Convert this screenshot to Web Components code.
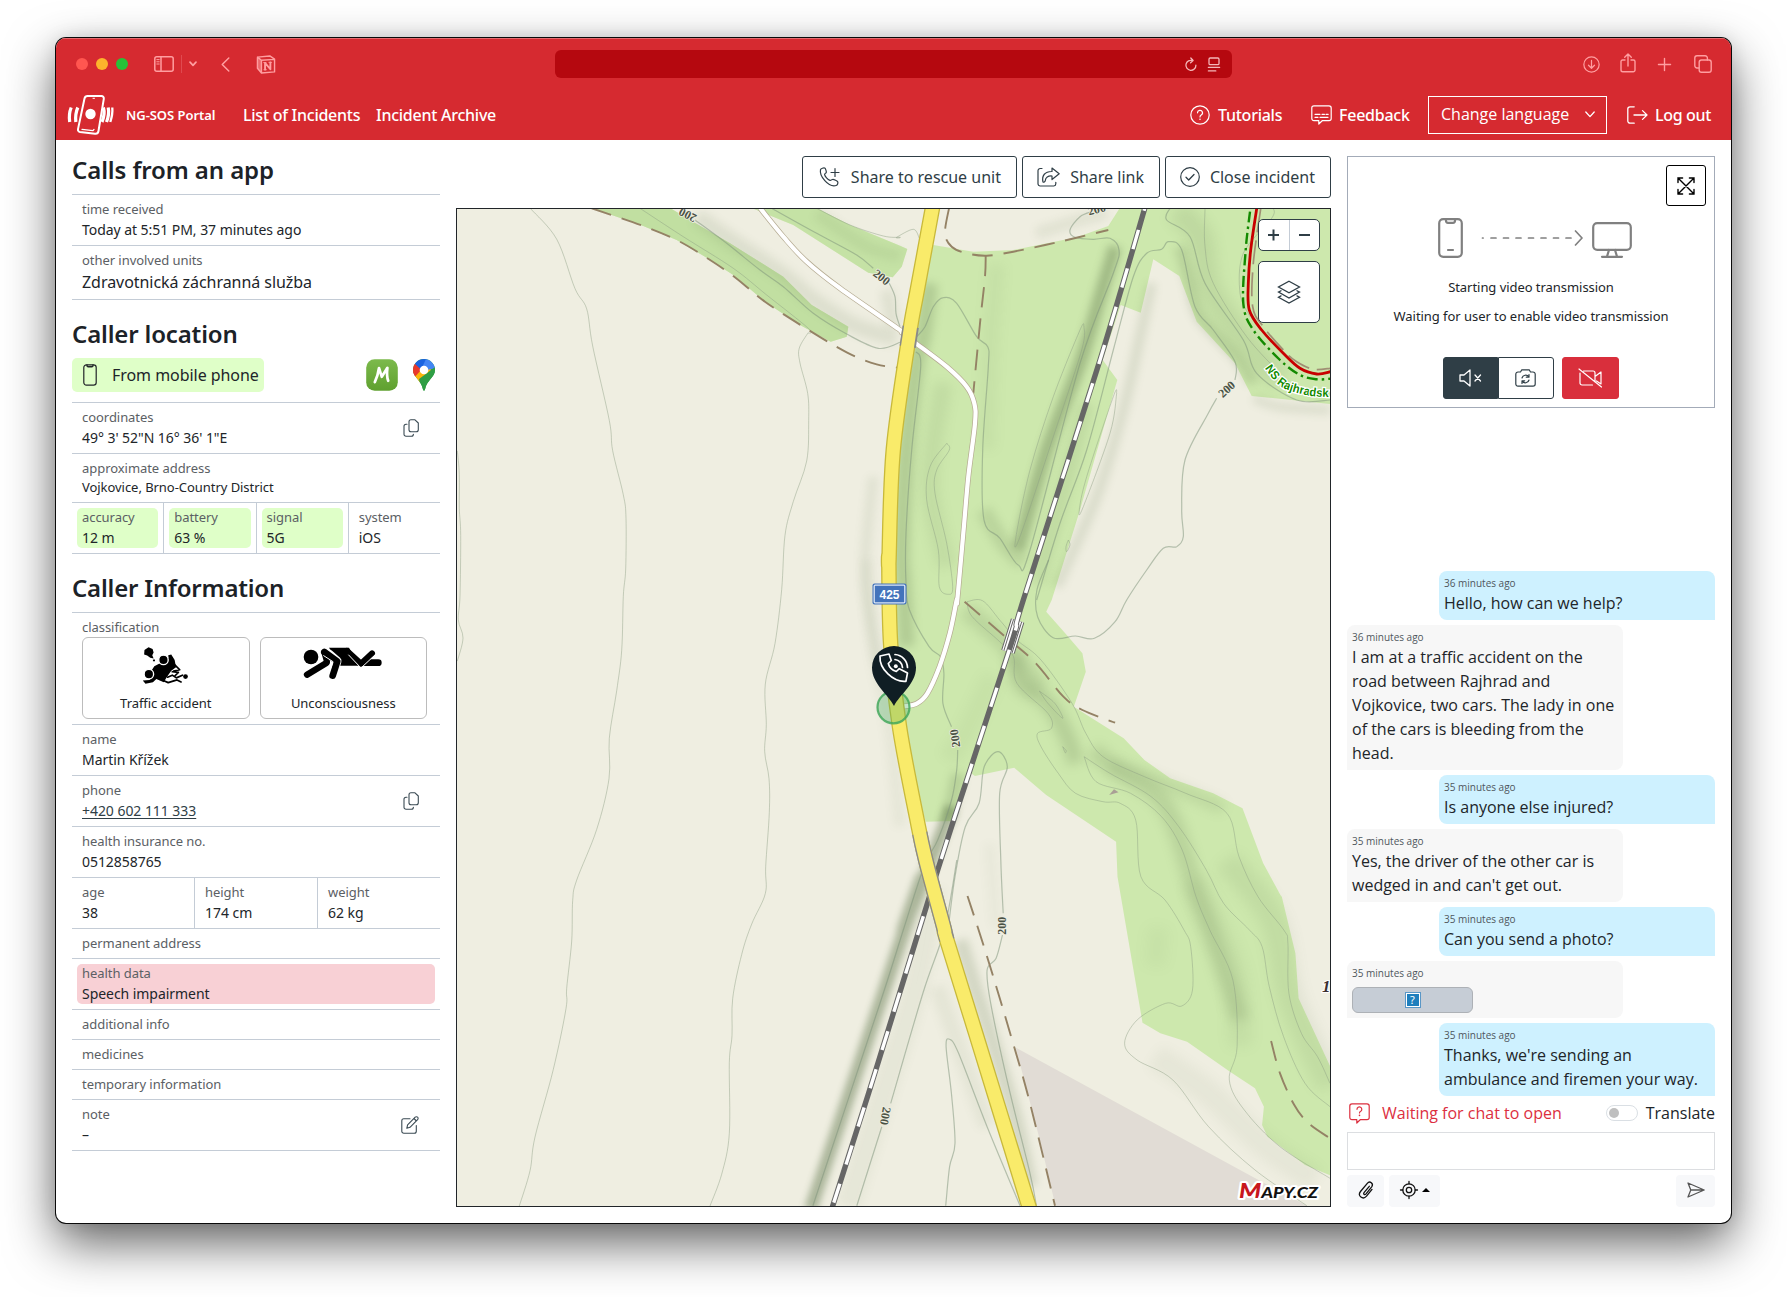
<!DOCTYPE html>
<html lang="en">
<head>
<meta charset="utf-8">
<title>NG-SOS Portal</title>
<style>
  html, body { margin: 0; height: 100%; }
  body { background: #fff; overflow: hidden; font-family: "Noto Sans", "Open Sans", sans-serif; color: #212529; letter-spacing: -.05px; }
</style>
</head>
<body>
<portal-app></portal-app>
<script>
const el = (name, css, html) => customElements.define(name, class extends HTMLElement {
  constructor() { super(); this.attachShadow({ mode: 'open' }); }
  connectedCallback() {
    this.shadowRoot.innerHTML = `<style>*{box-sizing:border-box}${css}</style>` + (typeof html === 'function' ? html(this) : html);
  }
});

/* ---------- icons ---------- */
const ICONS = {
  sidebar: ['0 0 20 16', '<g stroke-width="1.5"><rect x=".8" y=".8" width="18.4" height="14.4" rx="2"/><path d="M7 1v14"/></g><path stroke-width="1" d="M2.8 3.6h2.4M2.8 5.8h2.4M2.8 8h2.4"/>'],
  caret: ['0 0 8 6', '<path stroke-width="1.7" d="M1 1.2 4 4.4 7 1.2"/>'],
  back: ['0 0 9 16', '<path stroke-width="1.6" d="M8 1 1 8l7 7"/>'],
  notion: ['0 0 20 20', '<path stroke-width="1.5" d="M1 2.2 14 1l5 3.4v13.4L5.2 19 1 14zM5.2 5.6 19 4.6M1 2.2l4.2 3.4V19"/><path fill="currentColor" stroke="none" opacity=".55" d="M1 2.2l4.2 3.4V19L1 14z"/><path stroke-width="2" d="M9 15.4V8.4l5.6 6.6V7.8"/><path stroke-width="1" d="M7.6 8h2.4M7.8 15.5h2.6M13 7.7h3"/>'],
  reload: ['0 0 12 15', '<path stroke-width="1.3" d="M10.9 8.2a5 5 0 1 1-3.3-4.6M5.8 1l2.3 2.5-2.5 2.2"/>'],
  reader: ['0 0 12 15', '<rect x="1" y="1" width="10" height="6.6" rx="1.2" stroke-width="1.3"/><path stroke-width="1.3" d="M.4 10.4h11.2M.4 13.9h7.4"/>'],
  download: ['0 0 18 18', '<circle cx="9" cy="9" r="8.1" stroke-width="1.3"/><path stroke-width="1.3" d="M9 4.7v8M5.8 9.8 9 13l3.2-3.2"/>'],
  upload: ['0 0 16 20', '<path stroke-width="1.4" d="M5 7H2.6A1.6 1.6 0 0 0 1 8.600V17a1.800 1.800 0 0 0 1.800 1.800h10.400A1.800 1.800 0 0 0 15 17V8.600A1.600 1.600 0 0 0 13.400 7H11M8 13V1.200M4.700 4.300 8 1.100l3.300 3.200"/>'],
  plus: ['0 0 14 14', '<path stroke-width="1.5" d="M7 .5v13M.5 7h13"/>'],
  tabs: ['0 0 18 18', '<rect x="5.200" y="5" width="12" height="12.200" rx="2.200" stroke-width="1.400"/><path stroke-width="1.400" d="M5 13H3a2.200 2.200 0 0 1-2.200-2.200V3A2.200 2.200 0 0 1 3 .8h8.200A2.200 2.200 0 0 1 13.400 3v2"/>'],
  logo: ['0 0 46 40', '<path stroke-width="2" d="M20 1h13.500a2.400 2.400 0 0 1 2.300 2.800L30.500 36a3.200 3.200 0 0 1-3.500 2.700L12 37a2.400 2.400 0 0 1-2-2.900L16.500 3.500A3.300 3.300 0 0 1 20 1z"/><path stroke-width="1.300" d="m14 34.400 11 1.200 1-1.200"/><circle cx="22.500" cy="19" r="5.200" fill="currentColor" stroke="none"/><path stroke-width="1" d="M25 3.300h1.500"/><path stroke-width="3.200" stroke-linecap="butt" d="M3.200 12.500Q.5 19 1.700 27M9.800 12.500Q7 19 7.800 27M35.400 12.500Q37.400 19 34 27M40.200 12.500Q41.600 19 38.500 27"/><path stroke-width="2.300" stroke-linecap="butt" d="M44.300 12.500Q44.900 19 42.300 27"/>'],
  help: ['0 0 20 20', '<circle cx="10" cy="10" r="9.200" stroke-width="1.200"/><path stroke-width="1.200" d="M7.500 7.800a2.500 2.500 0 1 1 3.700 2.200c-.8.500-1.200.9-1.200 1.900"/><circle cx="10" cy="14.200" r=".8" fill="currentColor" stroke="none"/>'],
  feedback: ['0 0 21 20', '<path stroke-width="1.200" d="M3 .8h15A2.200 2.200 0 0 1 20.200 3v10.500a2.200 2.200 0 0 1-2.200 2.200h-6.800L7.800 19v-3.300H3a2.200 2.200 0 0 1-2.200-2.200V3A2.200 2.200 0 0 1 3 .8zM4 9.300h5M11 9.300h2.500M15 9.300h2.200M4 12.300h3M9 12.300h8"/>'],
  chevron: ['0 0 10 7', '<path stroke-width="1.300" d="M.8 1 5 5.600 9.200 1"/>'],
  logout: ['0 0 21 18', '<path stroke-width="1.300" d="M7.200.8H3A2.200 2.200 0 0 0 .8 3v12A2.200 2.200 0 0 0 3 17.200h4.200M7 9h13M15.500 4.600 20 9l-4.500 4.400"/>'],
  phone: ['0 0 14 22', '<rect x=".8" y=".8" width="12.400" height="20.400" rx="2.600" stroke-width="1.200"/><path stroke-width="1.400" d="M4 1v.6c0 .8.4 1.200 1.200 1.200h3.600c.8 0 1.200-.4 1.200-1.200V1"/>'],
  copy: ['0 0 16 18', '<path stroke-width="1.100" d="M8 .7h3.700L15.300 4v6.800a2 2 0 0 1-2 2H8a2 2 0 0 1-2-2V2.700a2 2 0 0 1 2-2zM4 5.200h-1a2 2 0 0 0-2 2v8a2 2 0 0 0 2 2h5.400a2 2 0 0 0 2-2"/>'],
  edit: ['0 0 18 18', '<path stroke-width="1.100" d="M9 2.800H2.800a2 2 0 0 0-2 2v10.400a2 2 0 0 0 2 2h10.500a2 2 0 0 0 2-2V9.500M5.800 12.300l.8-3.500 7.600-7.600a1.600 1.600 0 0 1 2.400 2.400L9 11.300zM13 2.500 15.400 5"/>'],
  callplus: ['0 0 21 20', '<path stroke-width="1.200" d="M1 2.600c.3-1.100 3.300-2 4.200-1.500.9.600 1.800 3.400 1.600 4.300-.2.900-1.900 1.200-1.700 2.100.4 1.900 3 5 5.400 5.900 1 .4 1.800-1.100 2.700-1.100 1.100-.1 4.800 1.600 5.100 2.700.3 1.200-.3 3.200-1.600 3.500C8.600 20.700-.3 8.700 1 2.600zM15.500 1.500v8M11.500 5.500h8"/>'],
  sharelink: ['0 0 23 20', '<path stroke-width="1.200" d="M5 1.500H3.200A2.200 2.200 0 0 0 1 3.700v13.100A2.200 2.200 0 0 0 3.200 19h13.600a2.200 2.200 0 0 0 2-2.200v-1.500M6 15C4.500 8.500 8 4.300 15 4.500V1l7.200 5.700L15 12.500V9C11 8.700 8.500 10.300 8.300 13.500c0 1-1.800 2.200-2.300 1.500z"/>'],
  check: ['0 0 20 20', '<circle cx="10" cy="10" r="9.300" stroke-width="1.200"/><path stroke-width="1.300" d="M6 10.300 8.700 13 14 7.500"/>'],
  expand: ['0 0 18 18', '<path stroke-width="1.400" stroke-linejoin="miter" d="M1 5.600V1h4.600M12.400 1H17v4.600M17 12.400V17h-4.600M5.600 17H1v-4.600M1 1l16 16M17 1 1 17"/>'],
  bigphone: ['0 0 25 40', '<rect x="1.200" y="1.200" width="22.600" height="37.600" rx="4" stroke-width="2.200"/><path stroke-width="2.200" d="M8 1.500v1.300c0 1.200.8 2 2 2h5c1.200 0 2-.8 2-2V1.500M10 32h5"/>'],
  arrow: ['0 0 102 16', '<path stroke-width="1.700" stroke-dasharray="5 7.500" d="M10 8h86"/><path stroke-width="1.700" d="M1.500 8h.6m92.400-7 6.500 7-6.500 7"/>'],
  monitor: ['0 0 40 36', '<rect x="1.200" y="1.200" width="37.600" height="26.600" rx="4" stroke-width="2.200"/><path stroke-width="2.200" d="M17 28l-2 6.500M23 28l2 6.500M10 34.800h20"/>'],
  mute: ['0 0 23 18', '<path stroke-width="1.300" d="M1 6h4l6-5v16l-6-5H1zM16 6l5.500 6M21.500 6 16 12"/>'],
  flip: ['0 0 21 18', '<path stroke-width="1.200" d="M3 3h2.500l1.300-2.200h7.400L15.500 3H18a2.200 2.200 0 0 1 2.200 2.200V15a2.200 2.200 0 0 1-2.200 2.200H3A2.200 2.200 0 0 1 .8 15V5.200A2.200 2.200 0 0 1 3 3zM7 9a3.800 3.800 0 0 1 6.800-1.200M14 5.500v2.700h-2.700M14 11a3.800 3.800 0 0 1-6.800 1.200M7 14.500v-2.700h2.700"/>'],
  novideo: ['0 0 25 20', '<path stroke-width="1.200" d="M5.500 3H15a2 2 0 0 1 2 2v9M14.500 17H4a2 2 0 0 1-2-2V5M17 8.500l6-4.500v12l-4.500-3M1 1l22.500 18"/>'],
  layers: ['0 0 24 24', '<path stroke-width="1.300" stroke-linejoin="miter" d="M12 1.200 22.500 7 12 12.700 1.500 7zM4 10.700l-2.500 1.400L12 18l10.500-5.900L20 10.700M4 15.900l-2.500 1.400L12 23l10.500-5.700L20 15.900"/>'],
  question: ['0 0 21 21', '<path stroke-width="1.200" d="M3 .8h15A2.200 2.200 0 0 1 20.200 3v11.500a2.200 2.200 0 0 1-2.200 2.200h-6.800L7.800 20v-3.300H3A2.200 2.200 0 0 1 .8 14.500V3A2.200 2.200 0 0 1 3 .8zM8 6.300a2.400 2.400 0 1 1 3.700 2c-.9.500-1.200.9-1.200 1.700"/><circle cx="10.500" cy="12.400" r=".8" fill="currentColor" stroke="none"/>'],
  clip: ['0 0 16 18', '<path stroke-width="1.300" d="M11.300 5.300 6 11.700c-1 1.300.7 2.700 1.800 1.400l5.900-7.300c2.300-3.200-1.900-6.500-4.400-3.500L2.500 10.500c-3.300 4.300 2.400 8.900 6 4.700l5.500-6.800"/>'],
  target: ['0 0 18 18', '<circle cx="9" cy="9" r="6.200" stroke-width="1.300"/><circle cx="9" cy="9" r="2.700" stroke-width="1.300"/><path stroke-width="1.300" d="M9 .5v2.300M9 15.200v2.300M.5 9h2.300M15.200 9h2.300"/>'],
  send: ['0 0 18 16', '<path stroke-width="1.300" d="M1 1l16.200 7L1 15l2.800-7zM3.800 8h13"/>'],
  mapy: ['0 0 32 32', '<defs><linearGradient id="g" x2="0" y2="1"><stop stop-color="#7cba4c"/><stop offset="1" stop-color="#5fa02f"/></linearGradient></defs><rect x=".2" y=".2" width="31.600" height="31.600" rx="8.500" fill="url(#g)" stroke="none"/><path stroke="#fff" stroke-width="2.700" stroke-linejoin="round" d="M8.800 23.200Q11.800 17 13 9L15.800 17.800 21.400 8.800Q20.400 17 22.200 21.800"/>'],
  gmaps: ['0 0 22 32', '<clipPath id="p"><path d="M11 0a11 11 0 0 1 11 11c0 7.500-8 9.500-10 19.500-.3 1.700-1.700 1.700-2 0C8 20.500 0 18.500 0 11A11 11 0 0 1 11 0z"/></clipPath><g clip-path="url(#p)" stroke="none"><path fill="#34a047" d="M0 0h22v32H0z"/><path fill="#fbb60b" d="M-2 21 14 2l4 9L3 28z"/><path fill="#e8382c" d="M-4 18 8 3v5L0 19z"/><path fill="#e8382c" d="M0 3 9 10 0 20z"/><path fill="#1a63e0" d="M2 0h12L8.500 11 1.500 4.500z"/><path fill="#4285f4" d="M13 0h10v9l-9 2-5.500-1.500z"/><path fill="#2f9e44" d="M23 7.500v24H8L6 20z"/></g><circle cx="11" cy="11" r="4.300" fill="#fff" stroke="none"/>'],
  crash: ['280 260 135 115', '<g stroke="#000"><g fill="#000" stroke="none"><path d="M284 272 296 264l12 5 3 10-4 8 4 10-10-2-9-7-9-3z"/><rect x="309" y="300" width="6" height="5"/><path d="M354 287l9-2 10 16 4 22-14 10-14 20-8 14-22-10-10 10-22 4-8-9 20-2 8-14-2-14 8-12 14-8 16-6 12-12z"/></g><circle cx="340" cy="301" r="14" fill="#000" stroke="#fff" stroke-width="4"/><circle cx="297" cy="343" r="14" fill="#000" stroke="#fff" stroke-width="4"/><circle cx="405" cy="350" r="7" fill="#000" stroke="none"/><g stroke-width="5"><path d="M372 314l16 16-18 4M366 336l18 2-12 12M352 352l14-6 12 8 18-8M336 360l18 8 26-8 12 6"/></g></g>'],
  faint: ['760 265 240 105', '<g stroke="#000"><path fill="#000" stroke="none" d="M838 270h60l30 54h-56z"/><path stroke-width="19" d="M830 316 772 351"/><path stroke-width="18" d="M892 280 934 318 967 287"/><path stroke-width="20" d="M944 315h42"/><path stroke="#fff" stroke-width="3" d="M897 292 934 331 976 292"/><path stroke="#fff" stroke-width="25" d="M838 288 863 310 850 352"/><path stroke-width="20" d="M824 283 863 311 849 354"/><path stroke-width="18" d="M824 284 832 312"/><path stroke="#fff" stroke-width="3" d="M822 294 850 312 843 332"/><circle cx="784" cy="298" r="22" fill="#000" stroke="none"/></g>'],
};
el('ng-icon', ':host{display:block;flex:none;line-height:0}svg{display:block;width:100%;height:100%;overflow:visible}',
  h => { const [vb, body] = ICONS[h.getAttribute('name')];
    h.style.width = h.getAttribute('w') + 'px'; h.style.height = h.getAttribute('h') + 'px';
    return `<svg viewBox="${vb}" preserveAspectRatio="xMidYMid meet" fill="none" stroke="currentColor" stroke-linecap="round" stroke-linejoin="round">${body}</svg>`; });

/* ---------- window chrome ---------- */
el('mac-window', `:host{display:block;width:1675px;height:1185px;margin:38px 0 0 56px;border-radius:10px;background:#fff;
  box-shadow:0 0 0 1px #0a0a0a,0 20px 50px rgba(0,0,0,.62),0 0 18px rgba(0,0,0,.1)}
  .in{display:flex;flex-direction:column;height:100%;overflow:hidden;border-radius:10px}`, '<div class="in"><slot></slot></div>');

el('browser-bar', `:host{display:grid;grid-template-columns:499px 677px 1fr;align-items:center;height:52px;background:#d62a30;color:#ff9ea0;box-shadow:inset 0 1px #e6696d}
  .l{display:flex;align-items:center;padding-left:20px}
  i{width:12px;height:12px;border-radius:50%;margin-right:8px}
  .sep{width:1px;height:18px;background:#e04a50;margin:0 7px 0 7px}
  .addr{height:28px;border-radius:6px;background:#b5080f;display:flex;align-items:center;justify-content:flex-end;gap:11px;padding-right:12px;color:#f3b6b8}
  .r{display:flex;align-items:center;justify-content:flex-end;padding-right:19px}`,
  `<div class="l"><i style="background:#ff5650"></i><i style="background:#fdb42c"></i><i style="background:#27c138;margin-right:26px"></i>
   <ng-icon name="sidebar" w="20" h="16"></ng-icon><span class="sep"></span><ng-icon name="caret" w="8" h="6"></ng-icon>
   <ng-icon name="back" w="9" h="15" style="margin-left:24px"></ng-icon><ng-icon name="notion" w="20" h="19" style="margin-left:26px"></ng-icon></div>
   <div class="addr"><ng-icon name="reload" w="12" h="15"></ng-icon><ng-icon name="reader" w="12" h="15"></ng-icon></div>
   <div class="r"><ng-icon name="download" w="17" h="17"></ng-icon><ng-icon name="upload" w="16" h="20" style="margin:0 22px 2px 20px"></ng-icon><ng-icon name="plus" w="13" h="13"></ng-icon><ng-icon name="tabs" w="18" h="18" style="margin-left:23px"></ng-icon></div>`);

el('nav-item', ':host{display:flex;align-items:center;gap:8px;flex:none;white-space:nowrap;font-size:16px;font-weight:500;letter-spacing:var(--ls,-.25px)}', '<slot></slot>');
el('portal-nav', `:host{display:flex;align-items:center;height:50px;background:#d62a30;color:#fff;padding:0 20px 0 12px}
  .name{font-size:13px;font-weight:600;width:89px;margin:0 28px 0 12px;white-space:nowrap}
  .sp{flex:1}
  .sel{display:flex;align-items:center;justify-content:space-between;width:179px;height:38px;border:1px solid #fff;padding:0 11px 2px 12px;margin:0 20px 0 17px;font:500 16px "Open Sans","Noto Sans",sans-serif;letter-spacing:0;white-space:nowrap}`,
  `<ng-icon name="logo" w="46" h="40"></ng-icon><span class="name">NG-SOS Portal</span>
   <nav-item style="width:118px;margin-right:15px">List of Incidents</nav-item><nav-item>Incident Archive</nav-item><span class="sp"></span>
   <nav-item style="width:93px;margin-right:28px"><ng-icon name="help" w="20" h="20"></ng-icon>Tutorials</nav-item>
   <nav-item style="width:100px;gap:7px"><ng-icon name="feedback" w="21" h="20"></ng-icon>Feedback</nav-item>
   <div class="sel">Change language<ng-icon name="chevron" w="10" h="7"></ng-icon></div>
   <nav-item style="width:84px;gap:7px;--ls:-.33px"><ng-icon name="logout" w="21" h="18"></ng-icon>Log out</nav-item>`);

/* ---------- left column ---------- */
el('info-section', `:host{display:block}h2{margin:0;padding-bottom:var(--hb,10px);font:600 24px/29px "Noto Sans",sans-serif;letter-spacing:var(--hs,-.16px);white-space:nowrap;color:#1c2227}
  .rows{border-bottom:1px solid #c4ccd6}:host(:not(:last-of-type)){margin-bottom:19px}`,
  h => `<h2>${h.getAttribute('title-text')}</h2><slot name="lead"></slot><div class="rows"><slot></slot></div>`);
el('info-cell', `:host{display:block;flex:1 1 0;min-width:0;padding:5px}
  :host([divided]){border-right:1px solid #c4ccd6}
  .b{border-radius:5px;padding:0 5px;height:100%}
  :host([tone=good]) .b{background:#dfffc8}:host([tone=bad]) .b{background:#f8d0d5}
  .k{font-size:13px;line-height:19px;height:19px;color:#5b6064;white-space:nowrap}
  .v{display:block;font-size:var(--vs,14px);line-height:var(--vl,21px);white-space:nowrap}
  .row{display:flex;align-items:center;justify-content:space-between;height:100%}`,
  h => `<div class="b row"><div><div class="k">${h.getAttribute('k')}</div><span class="v"><slot></slot></span></div><slot name="act"></slot></div>`);
el('info-row', ':host{display:flex;border-top:1px solid #c4ccd6;height:51px}', '<slot></slot>');
el('kind-card', `:host{display:flex;flex-direction:column;align-items:center;justify-content:space-between;height:82px;border:1px solid #bcbcbc;border-radius:6px;font-size:13px;padding:8px 0 5px;line-height:20px}`, '<slot></slot>');
el('incident-details', `:host{display:block;width:368px;flex:none}
  .lead{display:flex;align-items:center;height:34px;margin-bottom:10px}
  .src{display:flex;align-items:center;width:192px;height:34px;border-radius:5px;background:#dfffc8;font-size:16px;padding-left:11px;gap:15px;margin-right:auto;white-space:nowrap}
  .kinds{display:flex;gap:10px;padding:0 13px 0 10px}
  .cls{border-top:1px solid #c4ccd6;height:112px;font-size:13px}
  .cls>p{margin:0;padding:5px 10px 0;line-height:19px;color:#5b6064;height:24px}
  a{color:#2f3e46;text-decoration:underline;text-underline-offset:2px}`,
  `<info-section title-text="Calls from an app" style="--hs:-.1px;margin-top:-1px"><info-row><info-cell k="time received">Today at 5:51 PM, 37 minutes ago</info-cell></info-row>
   <info-row style="height:54px"><info-cell k="other involved units" style="--vs:16px;--vl:24px">Zdravotnická záchranná služba</info-cell></info-row></info-section>
   <info-section title-text="Caller location"><div slot="lead" class="lead"><div class="src"><ng-icon name="phone" w="14" h="22"></ng-icon>From mobile phone</div>
     <ng-icon name="mapy" w="32" h="32"></ng-icon><ng-icon name="gmaps" w="22" h="32" style="margin:0 5px 0 15px"></ng-icon></div>
   <info-row><info-cell k="coordinates">49° 3' 52"N 16° 36' 1"E<ng-icon slot="act" name="copy" w="16" h="18" style="margin:0 11px 0 0;color:#3a4a53"></ng-icon></info-cell></info-row>
   <info-row style="height:49px"><info-cell k="approximate address" style="--vs:13px;--vl:19px">Vojkovice, Brno-Country District</info-cell></info-row>
   <info-row><info-cell divided tone="good" k="accuracy">12 m</info-cell><info-cell divided tone="good" k="battery">63 %</info-cell><info-cell divided tone="good" k="signal">5G</info-cell><info-cell k="system">iOS</info-cell></info-row></info-section>
   <info-section title-text="Caller Information" style="--hs:-.2px">
   <div class="cls"><p>classification</p><div class="kinds"><kind-card style="flex:1"><ng-icon name="crash" w="46" h="39"></ng-icon>Traffic accident</kind-card><kind-card style="flex:1"><ng-icon name="faint" w="80" h="35"></ng-icon>Unconsciousness</kind-card></div></div>
   <info-row><info-cell k="name">Martin Křížek</info-cell></info-row>
   <info-row><info-cell k="phone"><a>+420 602 111 333</a><ng-icon slot="act" name="copy" w="16" h="18" style="margin:0 11px 0 0;color:#3a4a53"></ng-icon></info-cell></info-row>
   <info-row><info-cell k="health insurance no.">0512858765</info-cell></info-row>
   <info-row><info-cell divided k="age">38</info-cell><info-cell divided k="height">174 cm</info-cell><info-cell k="weight">62 kg</info-cell></info-row>
   <info-row style="height:30px"><info-cell k="permanent address"></info-cell></info-row>
   <info-row><info-cell tone="bad" k="health data">Speech impairment</info-cell></info-row>
   <info-row style="height:30px"><info-cell k="additional info"></info-cell></info-row>
   <info-row style="height:30px"><info-cell k="medicines"></info-cell></info-row>
   <info-row style="height:30px"><info-cell k="temporary information"></info-cell></info-row>
   <info-row><info-cell k="note">–<ng-icon slot="act" name="edit" w="18" h="18" style="margin:0 11px 0 0;color:#3a4a53"></ng-icon></info-cell></info-row></info-section>`);

/* ---------- map ---------- */
const FRAMES = { n: [450, 200, 3, 3], e: [880, 150, 3, 3], m: [800, 560, 2.904, 3], s: [780, 860, 2.8, 3], w: [440, 150, 3, 1.4792] };
const pts = src => { let f, out = []; src.trim().split(/\s+/).forEach(t => { if (FRAMES[t]) { f = FRAMES[t]; return; } const [x, y] = t.split(',').map(Number); out.push([f[0] + x / f[2], f[1] + y / f[3]]); }); return out; };
const n1 = v => v.toFixed(1);
const poly = src => 'M' + pts(src).map(p => p.map(n1).join(' ')).join('L') + 'Z';
const curve = src => { const p = pts(src); let d = `M${n1(p[0][0])} ${n1(p[0][1])}`;
  for (let i = 0; i < p.length - 1; i++) { const a = p[i - 1] || p[i], b = p[i], c = p[i + 1], e = p[i + 2] || c;
    d += `C${n1(b[0] + (c[0] - a[0]) / 6)} ${n1(b[1] + (c[1] - a[1]) / 6)} ${n1(c[0] - (e[0] - b[0]) / 6)} ${n1(c[1] - (e[1] - b[1]) / 6)} ${n1(c[0])} ${n1(c[1])}`; } return d; };
const WOODS = [
  'n 425,24 660,24 720,60 840,130 1000,230 1085,315 1195,380 1190,410 1142,425 1050,375 945,305 850,225 765,170 680,120 580,78',
  'n 905,24 1100,24 1200,75 1350,137 e 82,297 65,350 38,382 n 1255,218 1030,75',
  'e 160,285 280,305 400,300 590,262 685,228 718,176 1351,176 1351,762 1115,738 1065,640 950,515 898,378 820,328 782,488 722,465 668,630 712,690 600,1080 515,1350 m 715,155 770,220 820,280 830,335 795,440 940,535 1000,600 1075,655 1200,700 1285,745 1345,910 1395,1005 s 1405,110 1443,280 1452,415 1545,630 1545,948 1470,915 1440,890 1365,830 1350,795 1355,740 1330,685 1260,635 1140,545 1065,520 1015,488 945,50 m 918,845 715,705 622,623 508,648 497,640 447,783 365,785 340,700 290,500 262,250 e 27,1290 40,900 88,560',
];
const SHADES = [
  ['m 440,740 400,850 300,1110 s 395,60 280,430 85,1050', 13, .46, 3.5], ['m 460,640 430,780', 14, .2, 4],
  ['e 705,290 660,440 600,640 500,900 415,1200', 13, .4, 4], ['e 310,1080 370,1180 430,1240', 16, .16, 5],
  ['e 150,400 130,560 110,640 80,900 65,1200 m 300,60 310,260', 16, .24, 5], ['e 190,700 150,1000 200,1250', 18, .1, 6],
  ['m 480,150 540,200 620,280 700,390', 18, .16, 6], ['m 620,280 640,370 720,430 780,540 800,610', 16, .22, 6],
  ['m 850,570 920,630 1030,700 1090,800 1150,1000 s 1200,200 1290,480', 18, .18, 6],
  ['m 900,610 1080,680 1230,745', 12, .14, 6], ['s 1250,0 1380,180 1430,420 1540,680', 26, .1, 7], ['s 1160,60 1270,330 1290,560', 24, .08, 7],
  ['s 505,240 545,380 600,560 660,780 700,980', 15, .19, 4], ['s 440,380 500,560 580,800', 16, .07, 5], ['s 430,80 380,380 290,700 190,1040', 24, .06, 5],
  ['n 740,50 840,120 1000,225 1090,300 1210,375 1340,415', 16, .12, 5], ['n 1100,40 1250,140 1350,170', 12, .09, 4], ['n 1310,270 1330,380', 14, .1, 4],
  ['e 900,290 930,400 960,500 1070,620 1120,700', 12, .18, 4], ['e 1120,745 1200,770 1351,780', 9, .13, 4], ['e 890,180 960,260 990,420 1100,580 1200,690', 24, .13, 7],
  ['e 815,400 780,560 730,780 650,1040 530,1310', 10, .15, 4], ['e 620,760 540,1060 470,1300', 16, .11, 5], ['e 680,190 600,210 470,250', 10, .11, 5],
  ['n 1270,830 1245,1130 1290,1400', 10, .1, 4], ['m 195,0 210,250 260,500 290,800', 12, .06, 4], ['e 350,340 330,600 320,900', 18, .06, 6],
  ['m 560,350 480,520 430,600', 22, .05, 6], ['s 1050,590 1200,700 1350,850 1500,960', 26, .06, 6], ['m 550,850 570,1100', 12, .04, 4], ['s 1060,200 1050,320', 22, .05, 7],
];
const CONTOURS = [
  'w 272,87 350,132 405,205 440,235 458,290 508,400 518,445 550,510 558,545 557,620 550,660 545,740 530,800 508,870 507,930 470,1005 410,1080 398,1110 395,1170 380,1240 378,1270 340,1360 285,1460 270,1510 238,1562',
  'w 1105,270 1078,293 1080,315 1103,360 1106,400 1100,460 1060,520 1035,570 1025,650 1005,730 976,790 979,850 974,890 987,930 988,980 977,1060 976,1100 935,1145 905,1190 878,1255 876,1310 868,1350 868,1455 845,1515 810,1562',
  'w 52,445 58,480 58,530 62,570 60,660 55,695 69,722 52,756',
  'n 570,25 700,110 850,205 950,285 1075,385 1075,400', 'n 1100,25 1200,75 1300,108 1350,112 e 50,262 100,238 118,265',
  'e 200,880 208,900 170,960 165,1030 200,1180 218,1310 205,1333 178,1310 175,1200 140,1050 150,950 200,880',
  'e 612,528 605,600 520,860 420,1160 408,1160 450,960 520,740 600,540 612,528', 'e 710,730 690,850 610,1070 598,1080 620,980 700,740 710,730',
  'e 975,175 975,290 1000,400 1100,560 1200,670', 'e 1180,175 1175,205 1090,310 1080,430 1110,500',
  'e 565,1170 570,1185 560,1205 558,1190 565,1170', 'm 763,560 773,572 770,578 763,560', 'm 695,393 740,430 763,475 720,430 695,393',
  'm 485,125 530,122 580,180 630,240 700,300 790,430 830,520 880,590 1000,650 1120,700 1240,760 1275,890 1330,1010 1405,1110 s 1422,250 1425,400 1460,520 1505,590 1540,670',
  'm 485,125 500,170 580,245 620,290 630,370 720,460 730,505 690,520 700,560 750,640 800,700 880,725 930,730 975,780 990,950 1060,1020 1115,1110 s 1150,260 1155,390 1125,438 1080,430 1000,480 965,550 1000,600 1100,660 1200,800 1330,930 1475,1037',
  'm 825,590 860,665 960,700 1050,770 1110,870 1150,1010 1190,1110 s 1268,360 1280,560 1258,660 1300,750 1400,860 1540,955',
  'm 825,590 900,640 1020,710 1100,800 1180,930 1230,1030 1305,1110 s 1350,260 1370,380 1410,530 1470,670 1540,740',
];
const BOLD_CONTOURS = [
  'n 735,60 830,130 930,210 1000,260 1090,340 1190,402 1285,445 1350,427 e 62,572', 'n 965,25 1100,100 1220,165 1270,205', 'n 1318,250 1335,290 1338,340 1350,380',
  'e 110,560 135,530 160,470 190,443 230,460 290,560 323,590 325,650 308,900 312,1110 360,1165 415,1245 450,1200 600,640 700,370 717,300 690,265 640,268 585,262 570,240 600,200 635,185',
  'e 108,605 122,650 95,900 78,1150 78,1300 m 318,150 375,260 408,290 418,340 415,430 440,500', 'm 458,570 455,630 440,720 400,840 360,920 300,1110 s 280,430 92,1037',
  'e 470,1350 540,1120 620,900 700,600 760,380 800,310 845,298 865,275 905,300 945,470 1000,540 1065,635 1065,690', 'e 1010,745 985,790 915,930 905,1080 910,1160 890,1190 850,1195 800,1260 740,1350 m 915,185 855,235 800,228 735,233 690,170 688,90 722,0',
  'e 870,175 860,210 930,260 975,400 1090,570 1130,670 1250,750 1351,750',
  'm 430,1110 450,950 480,800 520,730 535,620 575,575 602,620 580,700 583,900 590,1060', 's 495,0 460,210 400,400 310,730', 's 285,800 215,1037',
  's 623,225 605,295 580,330 590,430 640,680 700,940 718,1037', 's 464,1037 475,920 490,850 480,700 465,560 475,538 500,580 580,800 672,1037',
];
const TRACKS = [
  'n 425,25 580,78 680,120 765,170 850,228 945,305 1060,380 1190,457 1280,493 1345,503', 'e 207,175 195,250 215,290 260,310 320,317 400,305 540,275 685,240',
  'e 317,317 315,380 300,520 280,730', 'm 478,125 590,225 680,305 765,410 820,450 915,488', 's 525,108 580,290 650,540 700,730 770,1037', 's 1375,543 1400,640 1440,735 1480,790 1540,835',
];
const LANE = 'n 930,24 1000,110 1070,185 1170,265 1350,390 e 66,548 108,580 200,650 260,710 283,760 285,820 265,980 250,1150 232,1350 m 455,120 435,220 405,320 370,400 340,430 300,440';
const ROAD = 'e 160,160 112,420 87,560 40,900 27,1230 m 258,0 263,250 289,500 340,780 365,900 417,1100 s 467,240 548,520 706,1070';
const RAIL = 'e 797,165 660,630 430,1350 m 620,230 500,610 400,930 s 248,700 144,1050';
const LABELS = [['n 713,45', 207], ['n 1295,232', 38], ['e 1040,718', -42], ['m 450,535', -98], ['s 622,197', -90], ['s 295,768', 100], ['e 650,178', -15]];

el('map-view', `:host{display:block;height:999px;border:1px solid #212529;position:relative;overflow:hidden;background:#efeee1;letter-spacing:0}
  svg.map{display:block;width:873px;height:997px}
  .ctl{position:absolute;right:10px;width:62px;background:#fff;border:1px solid #2f3e46;border-radius:5px;display:flex;align-items:center;justify-content:center;color:#2f3e46}
  .zoom{top:10px;height:32px}.zoom b{flex:1;display:flex;align-items:center;justify-content:center;height:100%}.zoom b+b{border-left:1px solid #c4ccd6}
  .lay{top:52px;height:62px}`,
  () => {
    const line = (src, st) => `<path d="${curve(src)}" ${st}/>`;
    return `<svg class="map" viewBox="457 209 873 997" fill="none"><defs>
    ${[3.5, 4, 5, 6, 7].map(b => `<filter id="b${b * 10}" filterUnits="userSpaceOnUse" x="440" y="190" width="920" height="1040"><feGaussianBlur stdDeviation="${b}"/></filter>`).join('')}
    <path id="trail" d="${curve('e 1154,655 1200,708 1260,731 1320,740 1420,742')}"/></defs>
    <path fill="#e1dcd5" d="${poly('s 660,563 1310,943 1480,1040 772,1040 730,850')}"/>
    <g fill="#cde8ad">${WOODS.map(w => `<path d="${poly(w)}"/>`).join('')}</g>
    <path fill="#bcdc9b" opacity=".7" d="${poly(WOODS[0])}"/>
    <path fill="#bcdc9b" opacity=".45" d="${poly(WOODS[1])}"/>
    ${SHADES.map(([d, w, o, b]) => line(d, `stroke="#5d7549" stroke-width="${w}" opacity="${o}" filter="url(#b${b * 10})"`)).join('')}
    <g stroke="#8b9e83" stroke-opacity=".45" stroke-width="1">${CONTOURS.map(c => line(c, '')).join('')}</g>
    <g stroke="#7f947a" stroke-opacity=".52" stroke-width="1.200">${BOLD_CONTOURS.map(c => line(c, '')).join('')}</g>
    <g stroke="#948265" stroke-width="1.900" stroke-dasharray="20.500 11">${TRACKS.map(c => line(c, '')).join('')}</g>
    ${line('e 1110,185 1097,300 1090,460 1120,540 1200,630 1260,675 1310,688 1351,686', 'stroke="#138a00" stroke-width="2.400" stroke-dasharray="11 4 2.500 4"')}
    ${line('e 1142,176 1120,340 1118,470 1150,530 1215,605 1250,635 1300,658 1351,655', 'stroke="#a08f74" stroke-width="1.700" stroke-dasharray="24 8"')}
    ${line('e 1131,170 1112,300 1105,400 1108,480 1145,540 1210,610 1260,655 1310,672 1351,665', 'stroke="#c80000" stroke-width="2.800"')}
    ${line(LANE, 'stroke="#b5ab92" stroke-width="5.600"')}${line(LANE, 'stroke="#fff" stroke-width="4.200"')}
    ${line('m 632,182 604,275', 'stroke="#666" stroke-width="14"')}${line('m 632,182 604,275', 'stroke="#fff" stroke-width="12"')}${line('m 632,182 604,275', 'stroke="#666" stroke-width="9.500"')}${line('m 632,182 604,275', 'stroke="#fff" stroke-width="7.500"')}
    ${line(RAIL, 'stroke="#666" stroke-width="5.400"')}${line(RAIL, 'stroke="#fff" stroke-width="3.400" stroke-dasharray="20 20" stroke-dashoffset="14"')}
    ${line(ROAD, 'stroke="#c8b93a" stroke-width="15.600"')}
    ${line('e 92,530 83,590', 'stroke="#8a8a8a" stroke-width="16.400"')}${line('m 348,820 365,900 417,1100 s 467,240', 'stroke="#8a8a8a" stroke-width="15.600"')}
    ${line(ROAD, 'stroke="#f9eb6a" stroke-width="13"')}
    <path fill="#a99f95" d="${poly('m 898,705 912,688 925,697')}"/>
    <g font-family="Liberation Serif, serif" font-weight="700" font-size="12" fill="#4a5245" text-anchor="middle" stroke="#efeee1" stroke-width="1.500" paint-order="stroke">
    ${LABELS.map(([p, r]) => { const [x, y] = pts(p)[0]; return `<text transform="translate(${n1(x)} ${n1(y)}) rotate(${r})" y="4">200</text>`; }).join('')}</g>
    <text font-family="Liberation Sans Narrow, Liberation Sans, sans-serif" font-weight="700" font-size="12" fill="#138a00" stroke="#fff" stroke-width="2.500" paint-order="stroke"><textPath href="#trail" textLength="74" lengthAdjust="spacingAndGlyphs">NS Rajhradsk</textPath></text>
    <text x="1322" y="992" font-family="Liberation Serif, serif" font-style="italic" font-weight="700" font-size="17" fill="#3b2f2f" stroke="#fff" stroke-width="2" paint-order="stroke">1</text>
    <rect x="872.500" y="583.500" width="34" height="21" rx="2" fill="#4373bb"/><rect x="874.200" y="585.200" width="30.600" height="17.600" rx="1" stroke="#dbe6f5" stroke-width="1.300"/>
    <text x="889.500" y="598.500" text-anchor="middle" textLength="20" lengthAdjust="spacingAndGlyphs" font-family="Liberation Sans, sans-serif" font-weight="700" font-size="13" fill="#fff">425</text>
    <circle cx="893.500" cy="707.300" r="16" fill="#4caf64" fill-opacity=".33" stroke="#43a85c" stroke-opacity=".85" stroke-width="2.200"/>
    <path fill="#101e24" d="M894 706C888 694 872 684 872 667.500a22 21.500 0 0 1 44 0C916 684 900 694 894 706z"/>
    <g transform="translate(879.500 654)" stroke="#fff" stroke-width="1.700" stroke-linejoin="round" stroke-linecap="round"><path d="M.5 2 9.500 0l2.300 6.500-3 3c.9 3.700 4 6.700 8 8l3-2.800 8.200 4.300-1.600 8.300C14 28.500-.5 15 .5 2zM15.500 5.500a8.500 8.500 0 0 1 7.500 8M15.500.5A13.500 13.500 0 0 1 28 13.500"/><circle cx="16.300" cy="12.300" r="2" fill="#fff" stroke="none"/></g>
    <g font-family="Lato, Liberation Sans, sans-serif" font-weight="900" font-style="italic" stroke="#fff" stroke-width="4" stroke-linejoin="round" paint-order="stroke"><text x="1239" y="1197.500" font-size="21" fill="#111" textLength="79" lengthAdjust="spacingAndGlyphs"><tspan fill="#c8161d">M</tspan><tspan font-size="15">APY.CZ</tspan></text></g>
    </svg>
    <div class="ctl zoom"><b><svg width="11" height="12"><path d="M0 5h11v2H0zM4.500.5h2v11h-2z" fill="#2f3e46"/></svg></b><b><svg width="11" height="2"><path d="M0 0h11v2H0z" fill="#2f3e46"/></svg></b></div>
    <div class="ctl lay"><ng-icon name="layers" w="24" h="24"></ng-icon></div>`;
  });
el('outline-button', ':host{display:flex;align-items:center;justify-content:space-between;flex:none;height:42px;border:1px solid #2f3e46;border-radius:3px;color:#2f3e46;font-size:16px;letter-spacing:0;padding:0 15px 1px 16px;white-space:nowrap;box-sizing:border-box}', '<slot></slot>');
el('map-column', `:host{display:block;width:875px;flex:none}.bar{display:flex;justify-content:flex-end;gap:5px;margin-bottom:10px}`,
  `<div class="bar"><outline-button style="width:215px"><ng-icon name="callplus" w="22" h="20"></ng-icon>Share to rescue unit</outline-button>
   <outline-button style="width:138px;padding-left:14px"><ng-icon name="sharelink" w="23" h="20"></ng-icon>Share link</outline-button>
   <outline-button style="width:166px;padding-left:14px"><ng-icon name="check" w="20" h="20"></ng-icon>Close incident</outline-button></div><map-view></map-view>`);

/* ---------- right column ---------- */
el('video-panel', `:host{display:flex;flex-direction:column;align-items:center;height:252px;border:1px solid #a3abb8;padding:8px;font-size:13px;line-height:20px;white-space:nowrap;box-sizing:border-box}
  .ex{align-self:flex-end;width:40px;height:41px;border:1px solid #000;border-radius:3px;display:flex;align-items:center;justify-content:center;color:#000}
  .link{display:flex;align-items:center;color:#808080;margin-top:12px;height:40px;padding-left:8px}
  p{margin:0}.btns{display:flex;margin-top:31px}
  .btns div{display:flex;align-items:center;justify-content:center;height:42px;border:1px solid #2f3e46}`,
  `<div class="ex"><ng-icon name="expand" w="18" h="18"></ng-icon></div>
   <div class="link"><ng-icon name="bigphone" w="25" h="40"></ng-icon><ng-icon name="arrow" w="102" h="16" style="margin:0 9px 0 18px"></ng-icon><ng-icon name="monitor" w="40" h="36" style="margin-top:4px"></ng-icon></div>
   <p style="margin-top:19px">Starting video transmission</p><p style="margin-top:9px">Waiting for user to enable video transmission</p>
   <div class="btns"><div style="width:55px;background:#2f3e46;color:#fff;border-radius:3px 0 0 3px"><ng-icon name="mute" w="23" h="18"></ng-icon></div><div style="width:56px;border-radius:0 3px 3px 0;color:#2f3e46;padding-right:2px"><ng-icon name="flip" w="21" h="18"></ng-icon></div>
   <div style="width:57px;margin-left:8px;background:#d92f3c;border-color:#d92f3c;color:#fff;border-radius:3px"><ng-icon name="novideo" w="25" h="20"></ng-icon></div></div>`);
el('chat-bubble', `:host{display:block;box-sizing:border-box;width:276px;padding:5px;background:#f7f7f7;border-radius:8px 8px 8px 0;font:16px/24px "Open Sans","Noto Sans",sans-serif;letter-spacing:0;flex:none}
  :host([me]){align-self:flex-end;background:#cef1ff;border-radius:8px 8px 0 8px}
  time{display:block;font-size:10px;line-height:15px;color:#4f575d}`, h => `<time>${h.getAttribute('at')}</time><slot></slot>`);
el('missing-photo', `:host{display:flex;align-items:center;justify-content:center;width:121px;height:26px;margin:6px 0 0;border:1px solid #adb1b6;border-radius:6px;background:#c6cdd6;box-sizing:border-box}
  b{width:14px;height:14px;box-sizing:border-box;border:1px solid #fff;outline:1px solid #5a97c6;background:#1f7fbd;color:#fff;font:11px/12px "Noto Sans",sans-serif;text-align:center}`, '<b>?</b>');
el('chat-composer', `:host{display:block;font:16px/24px "Open Sans","Noto Sans",sans-serif;letter-spacing:0;white-space:nowrap}
  .st{display:flex;align-items:center;height:36px;padding:0 0 2px 2px;color:#dc2f3f}
  .st span{margin-left:12px}.tr{display:flex;align-items:center;margin-left:auto;gap:8px;color:#212529}
  .tg{width:32px;height:16px;border:1px solid #dadfe4;border-radius:8px;padding:2px;box-sizing:border-box}.tg i{display:block;width:10px;height:10px;border-radius:50%;background:#bfbfbf}
  .inp{height:38px;border:1px solid #dcdee1;box-sizing:border-box}
  .bt{display:flex;gap:5px;margin-top:5px}.bt div{display:flex;align-items:center;justify-content:center;gap:4px;height:32px;border-radius:4px;background:#f7f8fa;color:#111;padding-bottom:2px}
  .up{width:0;height:0;border:4px solid transparent;border-top:0;border-bottom-color:#000}`,
  `<div class="st"><ng-icon name="question" w="21" h="21"></ng-icon><span>Waiting for chat to open</span><div class="tr"><div class="tg"><i></i></div>Translate</div></div>
   <div class="inp"></div><div class="bt"><div style="width:37px"><ng-icon name="clip" w="16" h="18"></ng-icon></div><div style="width:51px"><ng-icon name="target" w="18" h="18"></ng-icon><span class="up"></span></div><div style="width:39px;margin-left:auto;color:#555"><ng-icon name="send" w="18" h="16"></ng-icon></div></div>`);
el('comm-column', `:host{display:flex;flex-direction:column;width:368px;height:1051px;flex:none}
  .log{flex:1;display:flex;flex-direction:column;justify-content:flex-end;gap:5px;min-height:0}`,
  `<video-panel></video-panel><div class="log">
   <chat-bubble me at="36 minutes ago">Hello, how can we help?</chat-bubble>
   <chat-bubble at="36 minutes ago">I am at a traffic accident on the road between Rajhrad and Vojkovice, two cars. The lady in one of the cars is bleeding from the head.</chat-bubble>
   <chat-bubble me at="35 minutes ago">Is anyone else injured?</chat-bubble>
   <chat-bubble at="35 minutes ago">Yes, the driver of the other car is wedged in and can't get out.</chat-bubble>
   <chat-bubble me at="35 minutes ago">Can you send a photo?</chat-bubble>
   <chat-bubble at="35 minutes ago"><missing-photo></missing-photo></chat-bubble>
   <chat-bubble me at="35 minutes ago">Thanks, we're sending an ambulance and firemen your way.</chat-bubble></div>
   <chat-composer></chat-composer>`);

el('portal-app', `:host{display:flow-root}main{display:flex;gap:16px;padding:16px}`,
  `<mac-window><browser-bar></browser-bar><portal-nav></portal-nav><main><incident-details></incident-details><map-column></map-column><comm-column></comm-column></main></mac-window>`);
</script>
</body>
</html>
